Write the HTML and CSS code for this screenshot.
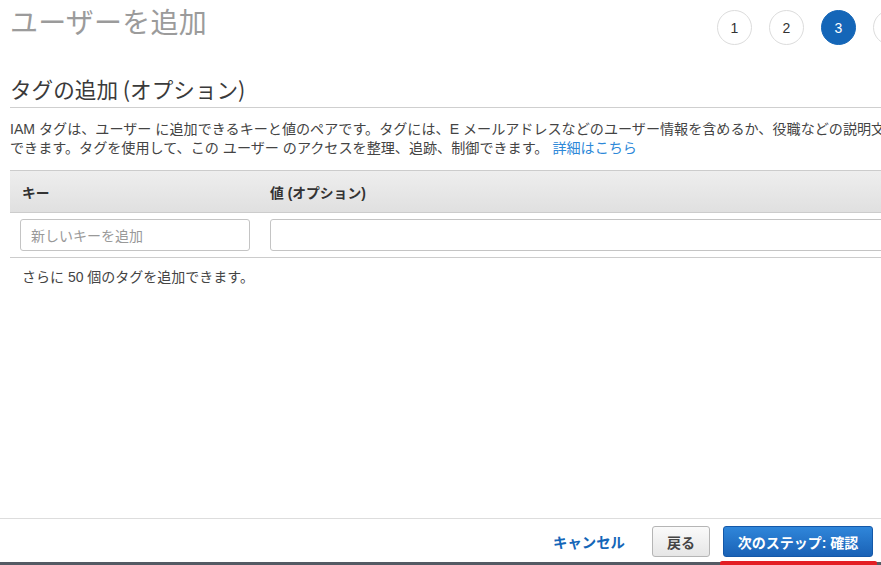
FILE: index.html
```html
<!DOCTYPE html>
<html lang="ja">
<head>
<meta charset="utf-8">
<title>ユーザーを追加</title>
<link rel="stylesheet" href="styles.css">
</head>
<body>
<div class="main">
  <div class="top">
    <h1 class="title">ユーザーを追加</h1>
    <ol class="steps">
      <li class="step">1</li>
      <li class="step">2</li>
      <li class="step active">3</li>
      <li class="step">4</li>
    </ol>
  </div>
  <h2 class="section">タグの追加 (オプション)</h2>
  <p class="desc">IAM タグは、ユーザー に追加できるキーと値のペアです。タグには、E メールアドレスなどのユーザー情報を含めるか、役職などの説明文を含めることが<br>できます。タグを使用して、この ユーザー のアクセスを整理、追跡、制御できます。 <a class="link" href="#">詳細はこちら</a></p>
  <div class="tags">
    <div class="thead">
      <div class="col-key">キー</div>
      <div class="col-val">値 (オプション)</div>
    </div>
    <div class="trow">
      <div class="cell-key"><input class="input key-input" type="text" placeholder="新しいキーを追加"></div>
      <div class="cell-val"><input class="input val-input" type="text"></div>
    </div>
    <div class="note">さらに 50 個のタグを追加できます。</div>
  </div>
</div>
<div class="footer">
  <a class="cancel" href="#">キャンセル</a>
  <button class="btn btn-back">戻る</button>
  <button class="btn btn-next">次のステップ: 確認</button>
  <span class="mark"></span>
</div>
<div class="bottombar"></div>
</body>
</html>
```
FILE: styles.css
```css
* { box-sizing: border-box; }
html, body { margin: 0; padding: 0; }
body {
  width: 881px;
  height: 565px;
  overflow: hidden;
  display: flex;
  flex-direction: column;
  position: relative;
  background: #fff;
  font-family: "Liberation Sans", "Noto Sans CJK JP", sans-serif;
  color: #444;
}
.main {
  flex: 1;
  width: 960px;
  padding-left: 10px;
  overflow: hidden;
}
.top {
  display: flex;
  justify-content: space-between;
  align-items: flex-start;
  height: 55px;
  padding-right: 52px;
}
.title {
  margin: 0;
  padding-top: 3px;
  font-size: 28px;
  line-height: 36px;
  font-weight: 400;
  color: #9b9b9b;
  font-family: "Noto Sans CJK JP", sans-serif;
  letter-spacing: 0.2px;
}
.steps {
  list-style: none;
  margin: 10px 0 0;
  padding: 0;
  display: flex;
  gap: 17px;
}
.step {
  width: 35px;
  height: 35px;
  border-radius: 50%;
  border: 1px solid #dcdcdc;
  display: flex;
  align-items: center;
  justify-content: center;
  font-size: 14px;
  color: #333;
  background: #fff;
}
.step.active {
  background: #1466b8;
  border-color: #1466b8;
  color: #fff;
}
.section {
  margin: 20px 0 0;
  padding-bottom: 4px;
  border-bottom: 1px solid #cfcfcf;
  font-size: 21.6px;
  line-height: 28px;
  font-weight: 400;
  color: #3a3a3a;
  font-family: "Noto Sans CJK JP", sans-serif;
}
.desc {
  margin: 12px 0 12px;
  font-size: 14.1px;
  line-height: 19px;
  color: #444;
  white-space: nowrap;
}
.link { color: #2d88d8; text-decoration: none; }
.thead {
  display: flex;
  height: 43px;
  border-top: 1px solid #cccccc;
  border-bottom: 1px solid #cccccc;
  background: linear-gradient(#eeeeee, #e0e0e0);
  align-items: center;
  font-size: 13.8px;
  font-weight: 700;
  color: #333;
}
.col-key { width: 250px; padding-left: 12px; }
.col-val { padding-left: 10px; }
.trow {
  display: flex;
  padding: 6px 0;
  border-bottom: 1px solid #cccccc;
}
.cell-key { width: 250px; padding-left: 10px; }
.cell-val { flex: 1; padding-left: 10px; }
.input {
  height: 32px;
  border: 1px solid #c4c4c4;
  border-radius: 3px;
  padding: 0 10px;
  font-family: "Noto Sans CJK JP", sans-serif;
  font-size: 14px;
  color: #333;
  background: #fff;
}
.input::placeholder { color: #999; }
.key-input { width: 230px; }
.val-input { width: 100%; }
.note {
  padding: 10px 0 0 12px;
  font-size: 14px;
  line-height: 19px;
  color: #444;
}
.footer {
  display: flex;
  justify-content: flex-end;
  align-items: center;
  border-top: 1px solid #dddddd;
  padding: 7px 8px 5px 0;
  height: 44px;
  position: relative;
}
.cancel {
  color: #1466b8;
  font-weight: 700;
  font-size: 14.4px;
  text-decoration: none;
  margin-right: 27px;
}
.btn {
  height: 31px;
  border-radius: 3px;
  font-family: "Liberation Sans", "Noto Sans CJK JP", sans-serif;
  font-size: 14px;
  font-weight: 700;
  cursor: pointer;
  padding: 0;
}
.btn-back {
  width: 58px;
  border: 1px solid #b5b5b5;
  background: linear-gradient(#fafafa, #e6e6e6);
  color: #444;
  margin-right: 13px;
}
.btn-next {
  width: 150px;
  border: 1px solid #1458a8;
  background: linear-gradient(#2f86da, #1a62b6);
  color: #fff;
}
.bottombar {
  height: 3px;
  background: #545b64;
}
.mark {
  position: absolute;
  left: 720px;
  top: 42px;
  width: 157px;
  height: 5px;
  background: #e31e24;
  border-radius: 2px;
  z-index: 2;
}
```
